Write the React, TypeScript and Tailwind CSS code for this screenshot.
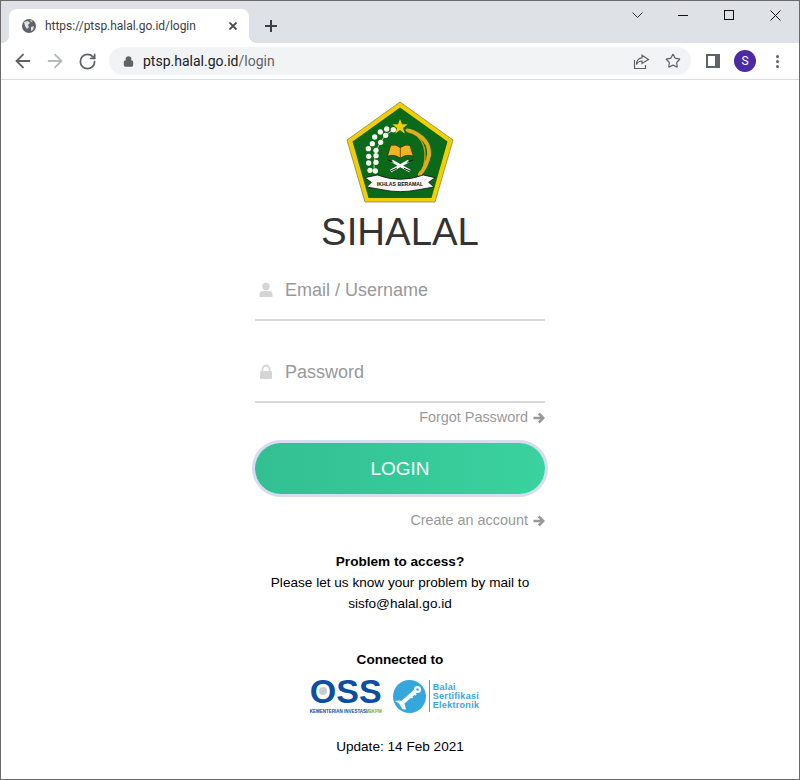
import { ArrowLeft, ArrowRight, RotateCw, Lock, Star } from 'lucide-react';

function Emblem() {
  const flowers = [[100, 56], [80, 54], [61, 63], [77, 73], [44, 78], [62, 94], [37, 98], [48, 118], [25, 113], [48, 134], [26, 136], [48, 154], [26, 156], [46, 180], [30, 178]];
  const grains = [[150, 60, 20], [165, 66, 30], [178, 74, 40], [190, 84, 50], [199, 96, 60], [205, 110, 75], [207, 125, 85], [205, 140, 100], [200, 155, 110], [193, 170, 120], [184, 184, 130]];
  return (
    <svg width="108" height="102" viewBox="346 100 108 102" className="block">
      <polygon points="400,101 453,139 435,201 365,201 347,139" fill="#f4cf00" stroke="#77774a" strokeWidth="0.7" />
      <polygon points="400,106.5 447.5,140.5 431.5,197 368.5,197 352.5,140.5" fill="#0a6a1a" />
      <g transform="translate(360 110) scale(0.3333)">
        <polygon points="120,24 126,40 143,40 129,51 135,68 120,57 105,68 111,51 97,40 114,40" fill="#f4cf00" />
        <path d="M98 58 Q40 90 42 185" fill="none" stroke="#bcd6a8" strokeWidth="3" />
        {flowers.map(([cx, cy], i) => (
          <circle key={i} cx={cx} cy={cy} r="8" fill="#f5f6ee" />
        ))}
        <path d="M142 56 Q222 90 182 195" fill="none" stroke="#c79a16" strokeWidth="4" />
        {grains.map(([cx, cy, r], i) => (
          <ellipse key={i} cx={cx} cy={cy} rx="14" ry="6" fill="#e0ae16" transform={`rotate(${r} ${cx} ${cy})`} />
        ))}
        <path d="M82 136 L92 103 Q108 98 121 110 Q135 98 150 103 L160 136 Q138 128 121 142 Q104 128 82 136 Z" fill="#eeb51c" stroke="#3f2d00" strokeWidth="2.5" />
        <path d="M121 110 V142" stroke="#3f2d00" strokeWidth="2" />
        <path d="M96 150 L150 180 M146 150 L92 180" stroke="#f7f7f7" strokeWidth="8" />
        <path d="M82 146 L100 154 M160 146 L142 154 M92 180 L110 172 M150 180 L132 172" stroke="#111" strokeWidth="3" />
        <path d="M14 200 L52 192 Q120 218 190 192 L226 200 L206 214 L222 228 L176 236 Q120 248 66 236 L20 228 L34 214 Z" fill="#f8f8f8" stroke="#111" strokeWidth="2.5" />
        <text x="120" y="226" textAnchor="middle" fontSize="15.5" fontWeight="700" fill="#111" fontFamily="Liberation Sans, sans-serif">IKHLAS BERAMAL</text>
      </g>
    </svg>
  );
}

function BseLogo() {
  return (
    <svg width="33" height="33" viewBox="0 0 33 33" className="block">
      <circle cx="16.5" cy="16.5" r="16.5" fill="#35a7dc" />
      <path d="M9 23 L24 10" stroke="#fff" strokeWidth="4" />
      <path d="M17 15 L19.5 18 M20.5 12.5 L23 15" stroke="#fff" strokeWidth="1.8" />
      <circle cx="24.5" cy="9.5" r="3.6" fill="#fff" />
      <circle cx="24.5" cy="9.5" r="1.2" fill="#35a7dc" />
      <path d="M2 21 Q8 19.5 11 22 L13 29.5 Q9 30 8 27 Q7 23 2 21 Z" fill="#fff" />
    </svg>
  );
}

function LinkArrow() {
  return (
    <svg width="12" height="12" viewBox="0 0 12 12" fill="none" stroke="#999" strokeWidth="2.5" className="shrink-0">
      <path d="M0.5 6 H10 M5.8 1.5 L10.3 6 L5.8 10.5" />
    </svg>
  );
}

export default function App() {
  return (
    <div className="w-[800px] h-[780px] overflow-hidden bg-white border-x border-b border-[#6b6b6b] box-border font-['Liberation_Sans',Arial,sans-serif]">
      {/* Tab strip */}
      <div className="h-[43px] bg-[#dee1e6] border-t border-[#6b6b6b] flex items-end pl-2">
        <div className="w-[240px] h-[34px] bg-white rounded-t-lg flex items-center pl-[13px] pr-[12px] relative">
          <svg width="14" height="14" viewBox="0 0 14 14" className="shrink-0">
            <circle cx="7" cy="7" r="7" fill="#5f6368" />
            <path d="M2 3 L6 2 L8 4 L6 6 L7 8 L5 10 L3 7 Z M9 8 L12 7 L11 11 L9 12 Z M8 1 L11 2 L9 3 Z" fill="#dfe1e5" />
          </svg>
          <span className="ml-[9px] text-[12px] leading-none tracking-[-0.03px] text-[#3c4043] font-['Roboto',sans-serif] flex-1">https://ptsp.halal.go.id/login</span>
          <svg width="8" height="8" viewBox="0 0 8 8" stroke="#45484c" strokeWidth="1.8"><path d="M0.5 0.5 L7.5 7.5 M7.5 0.5 L0.5 7.5" /></svg>
          <div className="absolute -right-2 bottom-0 w-2 h-2 bg-[radial-gradient(circle_at_100%_0,transparent_8px,white_8px)]" />
          <div className="absolute -left-2 bottom-0 w-2 h-2 bg-[radial-gradient(circle_at_0_0,transparent_8px,white_8px)]" />
        </div>
        <svg width="12" height="12" viewBox="0 0 12 12" stroke="#3c4043" strokeWidth="2" className="ml-[16px] mb-[11px]"><path d="M6 0 V12 M0 6 H12" /></svg>
        {/* window controls */}
        <div className="ml-auto h-full flex items-start pt-[9px] text-[#1f1f1f]">
          <svg width="11" height="7" viewBox="0 0 11 7" fill="none" stroke="#333" className="mt-[2px]"><path d="M0.5 0.5 L5.5 5.5 L10.5 0.5" /></svg>
          <div className="ml-[35px] mt-[5px] w-[10px] h-px bg-[#111]" />
          <div className="ml-[36px] w-[10px] h-[10px] border border-[#111]" />
          <svg width="11" height="11" viewBox="0 0 11 11" stroke="#111" className="ml-[36px] mr-[18px]"><path d="M0.5 0.5 L10.5 10.5 M10.5 0.5 L0.5 10.5" /></svg>
        </div>
      </div>

      {/* Toolbar */}
      <div className="h-[37px] bg-white border-b border-[#dadce0] flex items-center pl-[11px] text-[#5f6368]">
        <ArrowLeft size={22} strokeWidth={2} />
        <ArrowRight size={22} strokeWidth={2} className="ml-[10px] text-[#b6b8bb]" />
        <RotateCw size={19} strokeWidth={2.2} className="ml-[12px]" />
        <div className="ml-[12px] w-[582px] h-7 rounded-full bg-[#f1f3f4] flex items-center pl-[14px] pr-[10px]">
          <Lock size={11} strokeWidth={2.5} fill="#5f6368" className="shrink-0" />
          <span className="ml-[9px] text-[14px] text-[#202124] font-['Roboto',sans-serif]">
            ptsp.halal.go.id<span className="text-[#5f6368]">/login</span>
          </span>
          <svg width="17" height="17" viewBox="0 0 17 17" fill="none" stroke="#5f6368" strokeWidth="1.2" className="ml-auto mr-[15px]">
            <path d="M9 2.2 L15.5 6.5 L9 10.5 V8 C6 8 4.5 9.5 3.5 11.5 C3.5 7.5 6 5 9 4.8 Z" />
            <path d="M1.5 7 V15.5 H12.5 V12" />
          </svg>
          <Star size={16} strokeWidth={1.8} />
        </div>
        <div className="ml-[15px] w-[14px] h-[14px] bg-[#5f6368] p-[2px] pr-[5px]">
          <div className="w-full h-full bg-white" />
        </div>
        <div className="ml-[14px] w-[22px] h-[22px] rounded-full bg-[#4c2aa3] text-white text-[12px] flex items-center justify-center font-['Roboto',sans-serif]">S</div>
        <div className="ml-[20px] flex flex-col gap-[2px]">
          <span className="w-[3px] h-[3px] rounded-full bg-[#5f6368]" />
          <span className="w-[3px] h-[3px] rounded-full bg-[#5f6368]" />
          <span className="w-[3px] h-[3px] rounded-full bg-[#5f6368]" />
        </div>
      </div>

      {/* Page */}
      <div className="flex flex-col items-center pt-[21px]">
        <Emblem />
        <h1 className="text-[38.4px] leading-[44px] mt-[7px] text-[#333]">SIHALAL</h1>

        <div className="w-[290px] mt-[16px]">
          <div className="h-[51px] border-b-2 border-[#d9d9d9] flex items-start pt-[10px]">
            <svg width="14" height="16" viewBox="0 0 14 16" fill="#d5d5d5" className="ml-[4px] mt-[2px]">
              <circle cx="7" cy="4.5" r="3.8" />
              <path d="M0.5 15 V12 Q0.5 9 4 9 H10 Q13.5 9 13.5 12 V15 Z" />
            </svg>
            <span className="ml-[12px] text-[18px] leading-[20px] text-[#999]">Email / Username</span>
          </div>
          <div className="h-[51px] mt-[31px] border-b-2 border-[#d9d9d9] flex items-start pt-[10px]">
            <svg width="14" height="16" viewBox="0 0 14 16" fill="#d5d5d5" className="ml-[4px] mt-[2px]">
              <path d="M3.5 7 V5 a3.5 3.5 0 0 1 7 0 V7" fill="none" stroke="#d5d5d5" strokeWidth="1.8" />
              <rect x="1" y="7" width="12" height="8" rx="1.2" />
            </svg>
            <span className="ml-[12px] text-[18px] leading-[20px] text-[#999]">Password</span>
          </div>
          <div className="flex items-center justify-end gap-[5px] mt-[7px] h-[16px] text-[14.4px] text-[#999]">
            Forgot Password
            <LinkArrow />
          </div>

          <button className="mt-[17px] pt-[2px] block w-full h-[51px] rounded-full bg-[linear-gradient(90deg,#33bf92,#3ad29f)] text-white text-[19px] shadow-[0_0_0_3px_#d6dcf5]">
            LOGIN
          </button>

          <div className="flex items-center justify-end gap-[5px] mt-[19px] h-[16px] text-[14.4px] text-[#999]">
            Create an account
            <LinkArrow />
          </div>
        </div>

        <div className="w-[290px] mt-[22px] text-center text-[13.6px] leading-[21px] text-black">
          <p className="font-bold">Problem to access?</p>
          <p>Please let us know your problem by mail to</p>
          <p>sisfo@halal.go.id</p>
        </div>

        <p className="mt-[35px] text-[13.6px] leading-[21px] font-bold text-black">Connected to</p>

        <div className="mt-[7px] mr-[11px] flex items-center h-[38px]">
          <div className="flex flex-col items-center w-[72px]">
            <span className="relative text-[34px] leading-[26px] font-bold text-[#0b4ea2]">
              OSS
              <span className="absolute left-[9px] top-[9px] w-[8px] h-[8px] rounded-full bg-[#c9ccd0]" />
            </span>
            <span className="mt-[5px] text-[4.5px] leading-[5px] font-bold whitespace-nowrap text-[#0b4ea2]">KEMENTERIAN INVESTASI/<span className="text-[#6fb23f]">BKPM</span></span>
          </div>
          <div className="ml-[11px]"><BseLogo /></div>
          <div className="ml-[3px] border-l border-[#35a7dc] pl-[3px] h-[32px] flex flex-col justify-center text-[9px] leading-[9px] font-bold tracking-[0.3px] text-[#35a7dc]">
            <span>Balai</span>
            <span>Sertifikasi</span>
            <span>Elektronik</span>
          </div>
        </div>

        <p className="mt-[21px] text-[13.6px] leading-[21px] text-black">Update: 14 Feb 2021</p>
      </div>
    </div>
  );
}
